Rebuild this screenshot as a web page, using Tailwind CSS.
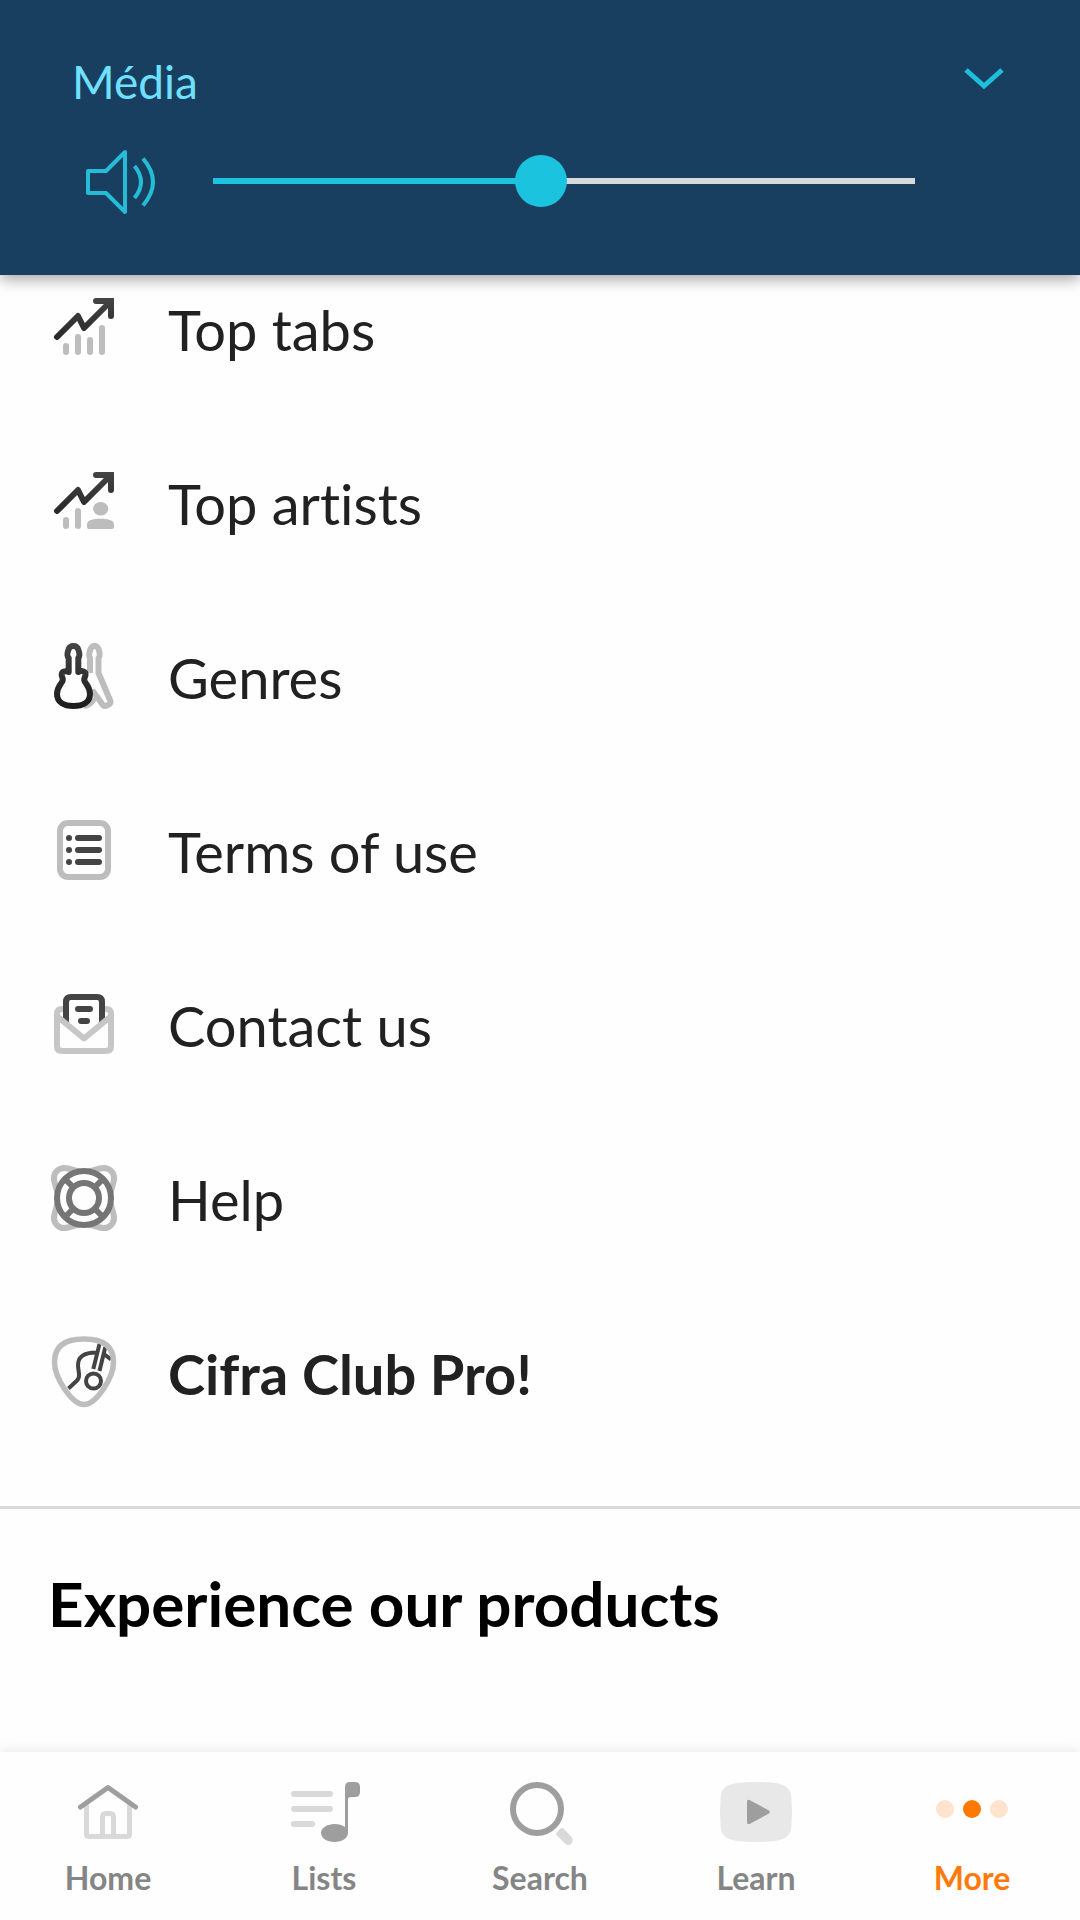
<!DOCTYPE html>
<html lang="en">
<head>
<meta charset="utf-8">
<meta name="viewport" content="width=device-width, initial-scale=1">
<title>More</title>
<script src="https://cdn.jsdelivr.net/npm/@tailwindcss/browser@4"></script>
</head>
<body class="flex min-h-screen flex-col bg-[#fefefe] font-['Lato',sans-serif] text-[#212121] [font-variant-ligatures:none]">

<!-- Volume panel -->
<header class="relative h-[275px] bg-[#183f5f] pt-[52px] shadow-[0_4px_14px_rgba(0,0,0,0.36)]">
  <div class="flex h-[60px] items-start justify-between px-[72px]">
    <label for="media-volume" class="text-[46px] leading-[60px] text-[#6fe0ff]">Média</label>
    <button type="button" aria-label="Expand volume controls" class="size-12">
      <svg class="size-12" viewBox="0 0 48 48" fill="none" stroke="#1fbfdb" stroke-width="5"><path d="M6 18 24 34 42 18"/></svg>
    </button>
  </div>
  <div class="mt-[33px] flex h-[72px] items-center pl-[84px] pr-[165px]">
    <svg class="mr-[57px] size-[72px] shrink-0" viewBox="0 0 72 72" fill="none" stroke="#24bcd6" stroke-width="4" stroke-linejoin="round"><path d="M4 26H22L41 7V67L22 48H4Z"/><path d="M50.500 21Q63.500 37 50.500 53M59 13.500Q79 37 59 60.500"/></svg>
    <input id="media-volume" type="range" min="0" max="1000" value="464" class="h-[52px] min-w-0 flex-1 appearance-none bg-transparent [&::-webkit-slider-runnable-track]:h-[6px] [&::-webkit-slider-runnable-track]:bg-[linear-gradient(to_right,#1cc3de_47%,#d9d9d9_47%)] [&::-webkit-slider-thumb]:mt-[-23px] [&::-webkit-slider-thumb]:size-[52px] [&::-webkit-slider-thumb]:appearance-none [&::-webkit-slider-thumb]:rounded-full [&::-webkit-slider-thumb]:bg-[#1cc3de]">
  </div>
</header>

<main>
  <ul class="flex flex-col gap-[98px] px-12 pb-[94px] pt-[17px] text-[56px] leading-[76px]">
    <li><a href="#" class="flex gap-12">
      <svg class="size-[72px] shrink-0" viewBox="0 0 72 72" fill="none" stroke-width="6" stroke-linecap="round">
        <defs><linearGradient id="dark" gradientUnits="userSpaceOnUse" x1="0" y1="6" x2="0" y2="66"><stop stop-color="#444"/><stop offset="1" stop-color="#1c1c1c"/></linearGradient></defs>
        <path stroke="#bdbdbd" d="M18 54V60M30 45V60M42 48V60M54 36V60"/>
        <path stroke="url(#dark)" stroke-linejoin="round" d="M9 45 30 24 36 36 62 10"/><path stroke="url(#dark)" d="M48 9H63V24"/>
      </svg><span>Top tabs</span></a></li>
    <li><a href="#" class="flex gap-12">
      <svg class="size-[72px] shrink-0" viewBox="0 0 72 72" fill="none" stroke-width="6" stroke-linecap="round">
        <path stroke="#bdbdbd" d="M18 54V60M30 45V60"/>
        <ellipse cx="52.700" cy="42.700" rx="7.700" ry="6.700" fill="#bdbdbd"/><path fill="#bdbdbd" d="M39 58C39 54 46 52.700 52.500 52.700S66 54 66 58V61Q66 63 64 63H41Q39 63 39 61Z"/>
        <path stroke="url(#dark)" stroke-linejoin="round" d="M9 45 30 24 36 36 62 10"/><path stroke="url(#dark)" d="M48 9H63V24"/>
      </svg><span>Top artists</span></a></li>
    <li><a href="#" class="flex gap-12">
      <svg class="size-[72px] shrink-0" viewBox="0 0 72 72" fill="none" stroke-width="6" stroke-linejoin="round">
        <path stroke="#bdbdbd" d="M42 33V18C40.500 16 41 13.500 42.300 9.500Q43.500 6 46.500 6T50.700 9.500C52 13.500 52.500 16 50.500 18V33L62 60Q64 64 58 65.800Q55 66.500 53.500 63L44 50M36 66Q43 65 46 58"/>
        <path stroke="url(#dark)" fill="#fefefe" d="M20.700 30V18C18.500 16 19 13.500 20.500 9.500Q21.700 6 25.400 6T30.300 9.500C31.800 13.500 32 16 30.300 18V32C34 30 38 31.500 37.500 35C37 38 35 39 37 42C39.500 46 42 48 42 54C42 62 35 66 25.500 66S9 62 9 54C9 48 11.500 46 14 42C16 39 14 38 13.700 35C13.500 31.500 17 30.500 20.700 32Z"/>
      </svg><span>Genres</span></a></li>
    <li><a href="#" class="flex gap-12">
      <svg class="size-[72px] shrink-0" viewBox="0 0 72 72" fill="none" stroke-width="6" stroke-linecap="round">
        <rect x="12" y="9" width="48" height="54" rx="8" stroke="#bdbdbd"/><path stroke="#444" d="M21 24H21M30 24H51M21 36H21M30 36H51M21 48H21M30 48H51"/>
      </svg><span>Terms of use</span></a></li>
    <li><a href="#" class="flex gap-12">
      <svg class="size-[72px] shrink-0" viewBox="0 0 72 72" fill="none" stroke-width="6" stroke-linecap="round">
        <path stroke="#c6c6c6" d="M16 21H14Q9 21 9 26V58Q9 63 14 63H58Q63 63 63 58V26Q63 21 58 21H56"/>
        <path fill="#fefefe" d="M15 9H57V34L36 50 15 34Z"/><path stroke="#444" stroke-linecap="butt" d="M18 37V14Q18 9 23 9H49Q54 9 54 14V37"/>
        <path stroke="#444" d="M30 21H42M33 33H39"/><path stroke="#c6c6c6" stroke-linejoin="round" d="M10 29 36 50.500 62 29"/>
      </svg><span>Contact us</span></a></li>
    <li><a href="#" class="flex gap-12">
      <svg class="size-[72px] shrink-0" viewBox="0 0 72 72" fill="none" stroke-width="6">
        <path stroke="#bdbdbd" d="M36 11 20 6.500C11 4 4 11 6.500 20L11 36 6.500 52C4 61 11 68 20 65.500L36 61 52 65.500C61 68 68 61 65.500 52L61 36 65.500 20C68 11 61 4 52 6.500Z"/>
        <circle cx="36" cy="36" r="27" fill="#fefefe" stroke="#757575"/><circle cx="36" cy="36" r="15" stroke="#757575"/>
        <path stroke="#757575" d="M17 17 25.500 25.500M55 17 46.500 25.500M17 55 25.500 46.500M55 55 46.500 46.500"/>
      </svg><span>Help</span></a></li>
    <li><a href="#" class="flex gap-12 font-bold">
      <svg class="size-[72px] shrink-0" viewBox="0 0 72 72" fill="none" stroke-width="4">
        <path stroke="#444" d="M20.500 52.500 29 44.500Q31.500 42 31 38L30 30C29.500 21 36 16.500 48 16.500M51.500 8 45.300 33M57.300 11 51.500 35M56 18 63 23.500"/><circle cx="45.500" cy="45" r="7.500" stroke="#444"/>
        <path stroke="#bdbdbd" stroke-width="5.500" d="M36 3C53 3 65.500 9 65.500 26C65.500 42 48 68.500 36 68.500S6.500 42 6.500 26C6.500 9 19 3 36 3Z"/>
      </svg><span>Cifra Club Pro!</span></a></li>
  </ul>
  <hr class="border-0 border-t-[3px] border-[#d9d9d9]">
  <h2 class="px-12 pb-16 pt-[58px] text-[62px] font-bold leading-[72px] text-black">Experience our products</h2>
</main>

<nav class="sticky bottom-0 mt-auto grid h-[168px] grid-cols-5 bg-[#fefefe] pt-6 text-center text-[32px] font-bold leading-[40px] text-[#858585] shadow-[0_-2px_12px_rgba(0,0,0,0.08)]">
  <a href="#" class="flex flex-col items-center gap-[10px]">
    <svg class="size-[72px]" viewBox="0 0 72 72" fill="none" stroke-width="6" stroke-linecap="round" stroke-linejoin="round">
      <path stroke="#d9d9d9" stroke-width="5" d="M14.500 29V58Q14.500 60.500 17 60.500H55Q57.500 60.500 57.500 58V29M30.500 60V41Q30.500 37.500 34 37.500H38Q41.500 37.500 41.500 41V60"/><path stroke="#9e9e9e" stroke-width="5" d="M8.500 31 36 11.500 63.500 31"/>
    </svg>Home</a>
  <a href="#" class="flex flex-col items-center gap-[10px]">
    <svg class="size-[72px]" viewBox="0 0 72 72" fill="none">
      <path stroke="#d9d9d9" stroke-width="6" stroke-linecap="round" d="M6 18H42M6 33H42M6 48H24"/>
      <path fill="#9e9e9e" d="M57 11Q57 6 62 6H67Q72 6 72 11V16Q72 21 67 21H63Q60 21 60 24V57C60 62 54 66 46.500 66S33 62 33 57S39 48 46.500 48Q53 48 57 51Z"/>
    </svg>Lists</a>
  <a href="#" class="flex flex-col items-center gap-[10px]">
    <svg class="size-[72px]" viewBox="0 0 72 72" fill="none">
      <circle cx="33" cy="33" r="24" stroke="#9e9e9e" stroke-width="6"/><path fill="#d9d9d9" d="M52.500 57 56 53Q58 51 60 53L67.500 61C70 64 68 68 65.500 69Q63 69.500 61 67.500L53 59.500Q51.500 58 52.500 57Z"/>
    </svg>Search</a>
  <a href="#" class="flex flex-col items-center gap-[10px]">
    <svg class="size-[72px]" viewBox="0 0 72 72">
      <path fill="#e8e8e8" d="M36 6C47 6 56 7 60 8C68 10 71 15 71.500 23Q72.500 36 71.500 49C71 57 68 62 60 64C56 65 47 66 36 66S16 65 12 64C4 62 1 57 .5 49Q-.5 36 .5 23C1 15 4 10 12 8C16 7 25 6 36 6Z"/><path fill="#9e9e9e" d="M27 26Q27 23 30 24.200L48.500 34.200Q50.800 36 48.500 37.800L30 47.800Q27 49 27 46Z"/>
    </svg>Learn</a>
  <a href="#" aria-current="page" class="flex flex-col items-center gap-[10px] text-[#ff7a0a]">
    <svg class="size-[72px]" viewBox="0 0 72 72"><circle cx="9" cy="33" r="9" fill="#ffe3cc"/><circle cx="36" cy="33" r="9" fill="#ff7800"/><circle cx="63" cy="33" r="9" fill="#ffe3cc"/></svg>More</a>
</nav>
</body>
</html>
